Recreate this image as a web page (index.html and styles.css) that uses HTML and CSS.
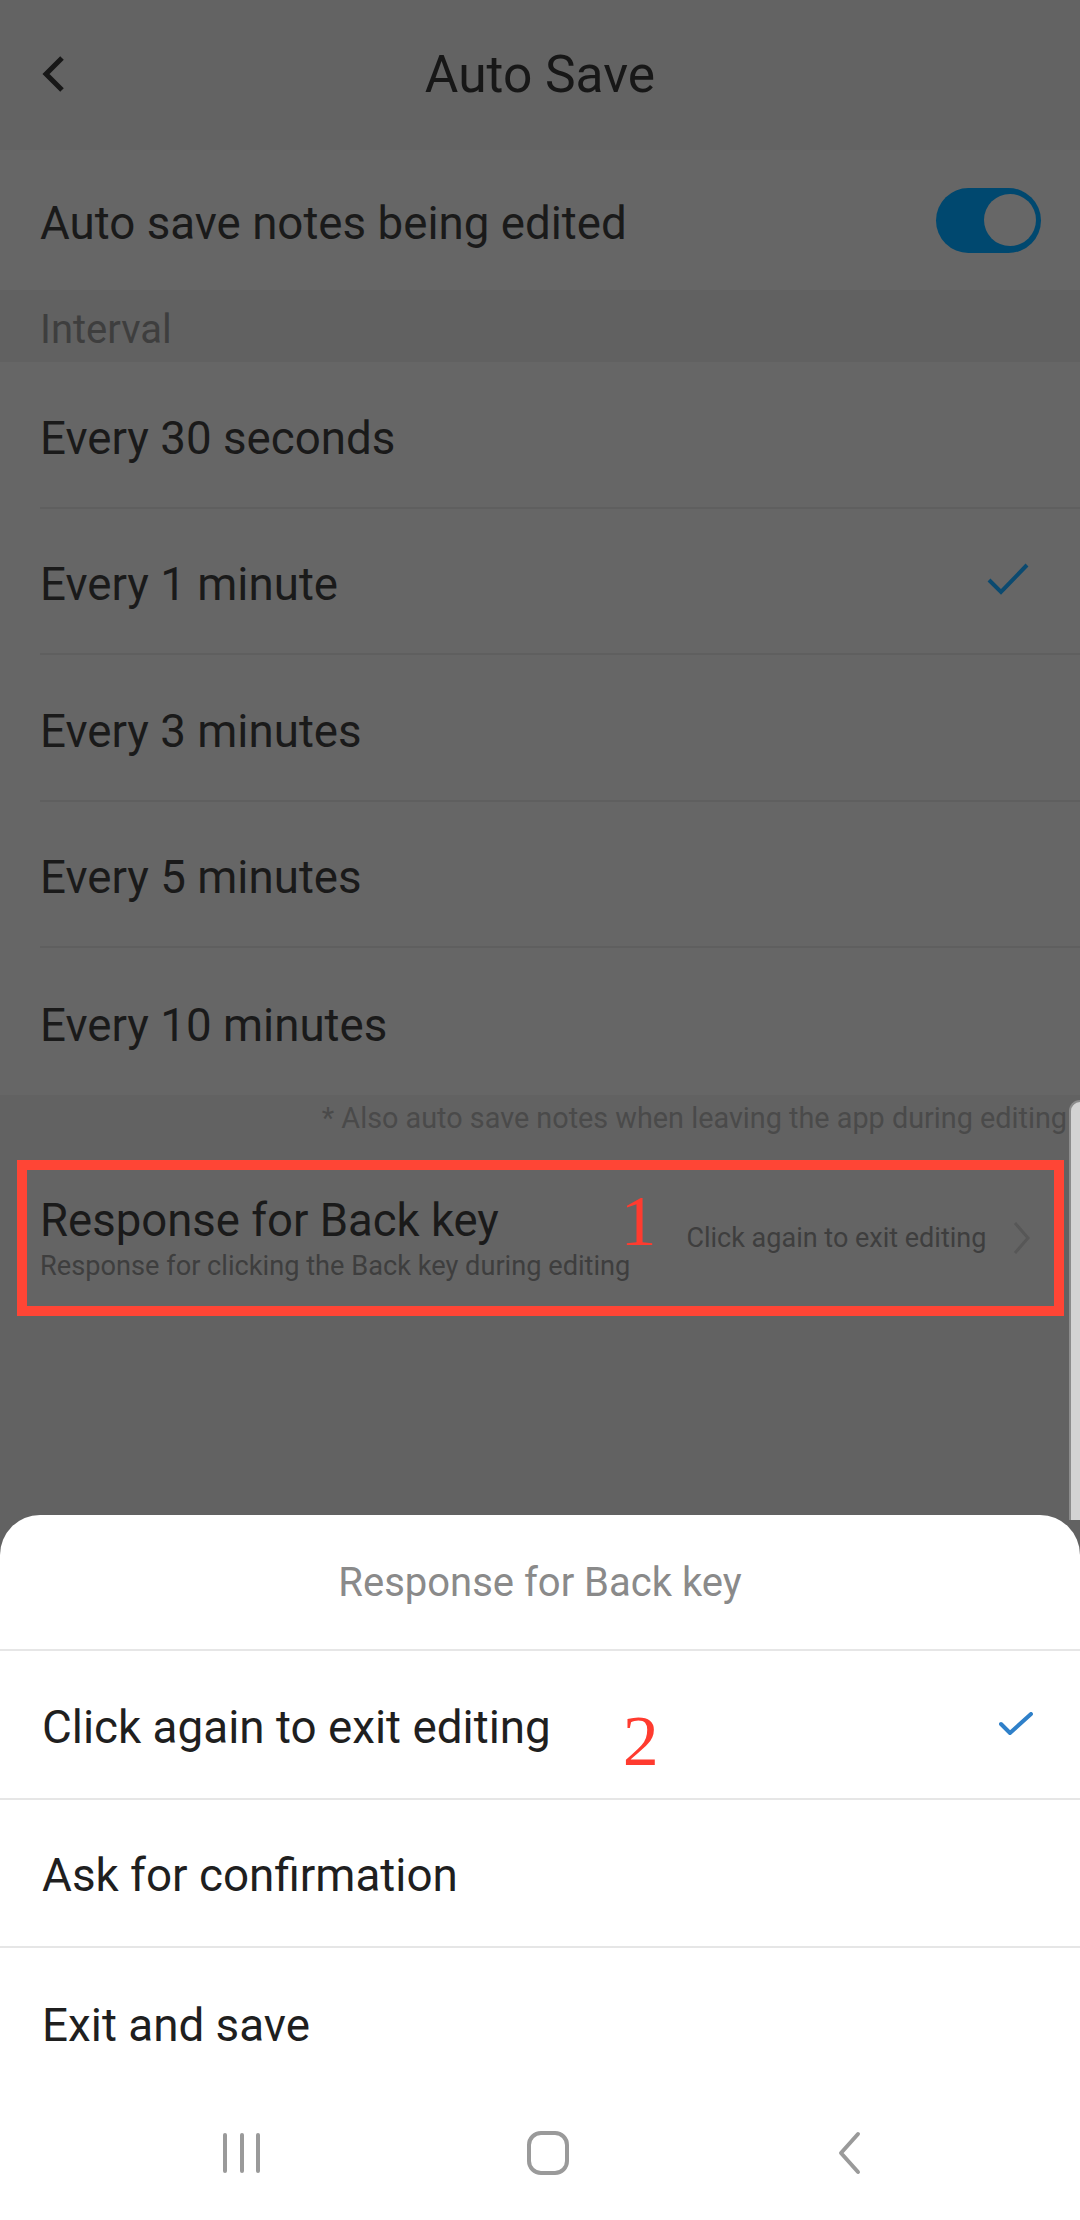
FILE: index.html
```html
<!DOCTYPE html>
<html lang="en">
<head>
<meta charset="utf-8">
<title>Auto Save</title>
<link rel="stylesheet" href="styles.css">
</head>
<body>
<div class="screen">
  <header class="topbar">
    <div class="back">
      <svg width="40" height="50" viewBox="0 0 40 50"><path d="M22 9 L6 25 L22 41" fill="none" stroke="#171717" stroke-width="5" stroke-linecap="butt" stroke-linejoin="miter"/></svg>
    </div>
    <h1 class="title">Auto Save</h1>
    <div></div>
  </header>

  <div class="toggle-row">
    <span class="row-text">Auto save notes being edited</span>
    <span class="switch"><span class="knob"></span></span>
  </div>

  <div class="section-label">Interval</div>

  <ul class="options">
    <li class="option"><span class="row-text">Every 30 seconds</span></li>
    <li class="option"><span class="row-text">Every 1 minute</span>
      <svg class="tick" width="44" height="34" viewBox="0 0 44 34"><path d="M3 18 L15 30 L41 3" fill="none" stroke="#0b4a70" stroke-width="4"/></svg>
    </li>
    <li class="option"><span class="row-text">Every 3 minutes</span></li>
    <li class="option"><span class="row-text">Every 5 minutes</span></li>
    <li class="option last"><span class="row-text">Every 10 minutes</span></li>
  </ul>

  <p class="note">* Also auto save notes when leaving the app during editing</p>

  <div class="backkey">
    <div class="backkey-text">
      <div class="backkey-title">Response for Back key</div>
      <div class="backkey-sub">Response for clicking the Back key during editing</div>
    </div>
    <span class="mark mark-1">1</span>
    <span class="backkey-value">Click again to exit editing</span>
    <svg class="chev" width="20" height="34" viewBox="0 0 20 34"><path d="M3 2 L16 17 L3 32" fill="none" stroke="#575757" stroke-width="3"/></svg>
  </div>

  <div class="scroll-edge"></div>

  <section class="sheet">
    <div class="sheet-title">Response for Back key</div>
    <ul class="sheet-list">
      <li class="sheet-item"><span>Click again to exit editing</span><span class="mark mark-2">2</span>
        <svg class="sheet-tick" width="34" height="24" viewBox="0 0 34 24"><path d="M2 12 L11 21 L32 2" fill="none" stroke="#2f80c9" stroke-width="4" stroke-linecap="round" stroke-linejoin="round"/></svg>
      </li>
      <li class="sheet-item"><span>Ask for confirmation</span></li>
      <li class="sheet-item last"><span>Exit and save</span></li>
    </ul>
    <nav class="navbar">
      <svg width="40" height="42" viewBox="0 0 40 42"><g stroke="#9a9a9a" stroke-width="4" stroke-linecap="round"><path d="M3 3 V39"/><path d="M20 3 V39"/><path d="M36 3 V39"/></g></svg>
      <svg width="46" height="46" viewBox="0 0 46 46"><rect x="4" y="3" width="38" height="40" rx="12" fill="none" stroke="#9a9a9a" stroke-width="4"/></svg>
      <svg width="28" height="44" viewBox="0 0 28 44"><path d="M24 3 L7 22 L24 41" fill="none" stroke="#9a9a9a" stroke-width="4" stroke-linecap="round" stroke-linejoin="round"/></svg>
    </nav>
  </section>
</div>
</body>
</html>
```

FILE: styles.css
```css
* { box-sizing: border-box; }
html, body { margin: 0; padding: 0; }
body {
  width: 1080px;
  height: 2220px;
  overflow: hidden;
  background: #626262;
  font-family: Roboto, "Noto Sans", "Liberation Sans", sans-serif;
}
.screen {
  position: relative;
  width: 1080px;
  height: 2220px;
  background: #626262;
}
.topbar {
  height: 150px;
  background: #636363;
  display: grid;
  grid-template-columns: 1fr auto 1fr;
  align-items: center;
  padding-bottom: 2px;
}
.back { padding-left: 40px; display: flex; align-items: center; }
.title {
  margin: 0;
  font-weight: 400;
  font-size: 51.5px;
  color: #171717;
}
.toggle-row {
  height: 140px;
  background: #666666;
  display: flex;
  align-items: center;
  justify-content: space-between;
  padding: 0 39px 0 40px;
}
.toggle-row .row-text { margin-top: 6px; }
.row-text {
  font-size: 45.7px;
  color: #1a1a1a;
}
.switch {
  width: 105px;
  height: 65px;
  border-radius: 33px;
  background: #00486f;
  display: flex;
  align-items: center;
  justify-content: flex-end;
  padding-right: 5px;
}
.knob {
  width: 52px;
  height: 52px;
  border-radius: 50%;
  background: #676767;
}
.section-label {
  height: 72px;
  background: #616161;
  display: flex;
  align-items: center;
  padding: 6px 0 0 40px;
  font-size: 40px;
  color: #3e3e3e;
}
.options {
  list-style: none;
  margin: 0;
  padding: 0 0 0 40px;
  background: #666666;
}
.option {
  height: 146.5px;
  display: flex;
  align-items: center;
  justify-content: space-between;
  padding-right: 50px;
  border-bottom: 2px solid #5f5f5f;
}
.option .row-text { margin-top: 8px; }
.option.last { border-bottom: none; }
.option .tick { margin-top: -4px; }
.note {
  margin: 0;
  height: 65px;
  padding: 6px 13px 0 0;
  text-align: right;
  font-size: 28.8px;
  color: #4a4a4a;
}
.backkey {
  margin: 0 16px 0 17px;
  height: 156px;
  border: 10px solid #ff4535;
  display: flex;
  align-items: center;
  padding: 0 22px 0 13px;
  background: #646464;
}
.backkey-text { display: flex; flex-direction: column; padding-top: 2px; }
.backkey-title { font-size: 45.5px; color: #1a1a1a; line-height: 54px; }
.backkey-sub { font-size: 27.2px; color: #3e3e3e; line-height: 36px; }
.mark {
  font-family: "Liberation Serif", "DejaVu Serif", serif;
  color: #ff3b2f;
  font-size: 72px;
  line-height: 1;
}
.mark-1 { margin-left: -10px; margin-top: -34px; }
.backkey-value {
  margin-left: 30px;
  font-size: 27px;
  color: #3e3e3e;
  margin-top: 0;
}
.chev { margin-left: auto; margin-top: 0; }
.scroll-edge {
  position: absolute;
  right: 0;
  top: 1100px;
  width: 11px;
  height: 420px;
  background: #d3d3d3;
  border-left: 2px solid #8c8c8c;
  border-top: 2px solid #8c8c8c;
  border-top-left-radius: 12px;
}
.sheet {
  position: absolute;
  left: 0;
  right: 0;
  top: 1515px;
  bottom: 0;
  background: #ffffff;
  border-radius: 40px 40px 0 0;
  display: flex;
  flex-direction: column;
}
.sheet-title {
  height: 136px;
  display: flex;
  align-items: center;
  justify-content: center;
  font-size: 40px;
  color: #8a8a8a;
  border-bottom: 2px solid #e6e6e6;
}
.sheet-list { list-style: none; margin: 0; padding: 0; }
.sheet-item {
  height: 148.5px;
  display: flex;
  align-items: center;
  padding: 6px 47px 0 42px;
  font-size: 45.8px;
  color: #1f1f1f;
  border-bottom: 2px solid #e6e6e6;
}
.sheet-item.last { border-bottom: none; }
.mark-2 { margin-left: 72px; margin-top: 28px; }
.sheet-tick { margin-left: auto; margin-top: -6px; }
.navbar {
  flex: 1;
  display: flex;
  align-items: center;
  justify-content: space-between;
  padding: 0 218px 10px 222px;
}
```
